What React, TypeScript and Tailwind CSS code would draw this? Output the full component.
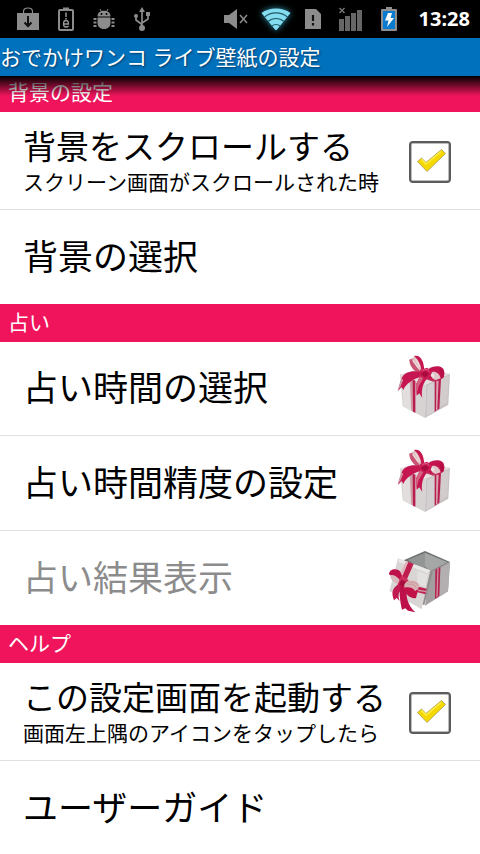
import { useState } from "react";
import type { ReactNode } from "react";

const FONT = "font-['Noto_Sans','Noto_Sans_CJK_JP',sans-serif]";

function StoreIcon() {
    return (
        <svg className="h-6 w-6" viewBox="0 0 24 24">
            <path d="M7.500 7V4.500C7.500 2 9.500 1 12 1S16.500 2 16.500 4.500V7" fill="none" stroke="#8c8c8c" strokeWidth="1.200" />
            <path d="M1 6H23V23H1Z" fill="#8c8c8c" />
            <path d="M12 9V18M8.500 15.500L12 19L15.500 15.500" fill="none" stroke="#111" strokeWidth="2" />
        </svg>
    );
}

function BatteryAppIcon() {
    return (
        <svg className="h-6 w-4" viewBox="0 0 16 24">
            <path d="M5 3V0.500H11V3" fill="#8c8c8c" />
            <rect x="1" y="3" width="14" height="20" rx="1" fill="none" stroke="#8c8c8c" strokeWidth="2" />
            <path d="M8 5.500V10M8 11V12.500" stroke="#999" strokeWidth="1.500" />
            <path d="M5.500 17H10.500C10.500 14 9.500 13.500 8 13.500S5.500 15 5.500 17S6.500 20 8 20S10 19.700 10.500 19" fill="none" stroke="#999" strokeWidth="1.300" />
        </svg>
    );
}

function AndroidIcon() {
    return (
        <svg className="h-6 w-6" viewBox="0 0 24 24" fill="#8c8c8c">
            <path d="M5.500 9.500C5.500 6 8 3.800 12 3.800S18.500 6 18.500 9.500Z" />
            <path d="M8 2L9.500 5M16 2L14.500 5" stroke="#8c8c8c" />
            <circle cx="9.500" cy="7" r="1" fill="#000" />
            <circle cx="14.500" cy="7" r="1" fill="#000" />
            <path d="M5.500 10.500H18.500V16C18.500 19.500 16 22 12 22S5.500 19.500 5.500 16Z" />
            <path d="M4.500 12H1.500M4.500 15.500H1.500M4.500 19H1.500M19.500 12H22.500M19.500 15.500H22.500M19.500 19H22.500" stroke="#8c8c8c" strokeWidth="2" />
        </svg>
    );
}

function UsbIcon() {
    return (
        <svg className="h-6 w-4" viewBox="0 0 16 24" fill="#8c8c8c">
            <path d="M8 4V21M8 17.500L2 13V9M8 16L14 12V7" fill="none" stroke="#8c8c8c" strokeWidth="1.700" />
            <path d="M8 0L11 5H5Z" />
            <circle cx="2" cy="9" r="2" />
            <path d="M12 5H16V9H12Z" />
            <circle cx="8" cy="21" r="3" />
        </svg>
    );
}

function MuteIcon() {
    return (
        <svg className="h-6 w-6" viewBox="0 0 24 24">
            <path d="M0 8H5L13 2V22L5 16H0Z" fill="#8c8c8c" />
            <path d="M16 8L23 16M23 8L16 16" stroke="#8c8c8c" strokeWidth="1.500" />
        </svg>
    );
}

function WifiIcon() {
    return (
        <svg className="h-6 w-8 drop-shadow-[0_0_3px_#2b8da6]" viewBox="0 0 32 24">
            <path d="M1.500 6C9 0 23 0 30.500 6L17 22.500Q16 24 15 22.500Z" fill="#84dcf0" />
            <path d="M4.500 10C11 4.500 21 4.500 27.500 10M8 14.500C12.500 10.500 19.500 10.500 24 14.500M12 19C14 17 18 17 20 19" fill="none" stroke="#1f5a68" strokeWidth="1.100" />
        </svg>
    );
}

function SimIcon() {
    return (
        <svg className="h-5 w-4" viewBox="0 0 16 20">
            <path d="M0 0H11L16 5V20H0Z" fill="#8c8c8c" />
            <path d="M8 6V12M8 14V16.500" stroke="#111" strokeWidth="2.200" />
        </svg>
    );
}

function SignalIcon() {
    return (
        <svg className="h-6 w-6" viewBox="0 0 24 24">
            <path d="M0.500 1L5.500 6M5.500 1L0.500 6" stroke="#777" strokeWidth="1.400" />
            <path d="M0 12H5V24H0ZM6 9H11V24H6ZM12 6H17V24H12ZM18 3H23V24H18Z" fill="#666" />
        </svg>
    );
}

function ChargingIcon() {
    return (
        <svg className="h-6 w-4" viewBox="0 0 16 24">
            <path d="M5 0H11V2H15Q16 2 16 3V23Q16 24 15 24H1Q0 24 0 23V3Q0 2 1 2H5Z" fill="#8f8f8f" />
            <path d="M2 4H14V22H2Z" fill="#0b7bd0" />
            <path d="M7 6H11L9.500 11H13L6 20L7.500 13.500H4Z" fill="#fff" />
        </svg>
    );
}

function GiftClosed() {
    return (
        <svg className="h-[72px] w-16 shrink-0" viewBox="24 24 192 216" aria-hidden="true">
            <path d="M60 88L130 70L210 86L137 119Z" fill="#e6e0e0" />
            <path d="M60 88L137 119L135 219L68 184Z" fill="#d8d3d3" />
            <path d="M66 104L90 114L92 194L70 183Z" fill="#e2dede" />
            <path d="M137 119L210 86L205 179L135 219Z" fill="#c8c2c3" />
            <path d="M142 122L164 112L162 200L140 212Z" fill="#d4cfd0" />
            <path d="M183 102L206 92L202 172L181 185Z" fill="#d2cccd" />
            <path d="M89 100L106 107V203L94 197Z" fill="#cf9ba4" />
            <path d="M98 104L106 107V203L99 200Z" fill="#b91c50" />
            <path d="M164 109L183 101L178 191L164 200Z" fill="#b91c50" />
            <path d="M169 107L176 104L172 195L168 197Z" fill="#d9a4ae" />
            <path d="M150 92L186 96L180 104L160 110L136 102Z" fill="#c1335f" />
            <path d="M130 80C116 88 92 70 88 44L106 34L124 46L133 76Z" fill="#ddbfc0" />
            <path d="M102 33C122 29 132 48 133 78L124 74C121 56 115 44 102 33Z" fill="#c71650" />
            <path d="M88 44L96 42L108 62L124 84L112 82C98 74 89 62 88 44Z" fill="#c85373" />
            <path d="M98 46L116 70M106 42L120 66" stroke="#efdcda" strokeWidth="4" />
            <path d="M126 82C98 74 72 82 65 100L54 138L65 126L70 135C78 116 98 102 130 94Z" fill="#c51652" />
            <path d="M64 100L53 134L60 128L70 104Z" fill="#cf91a0" />
            <path d="M138 78C150 66 176 58 188 70C196 80 194 94 188 100L174 107L150 102L138 92Z" fill="#c41450" />
            <path d="M150 86C158 76 176 79 182 100L168 105C160 104 153 97 150 86Z" fill="#e0c5c6" />
            <path d="M153 84C162 85 164 91 161 98L153 92Z" fill="#f1e5e3" />
            <path d="M178 72L190 74L191 96L184 99Z" fill="#b50e45" />
            <path d="M123 88L108 118L110 152L118 145L127 159C122 133 130 113 143 98Z" fill="#c51450" />
            <path d="M120 94L108 119L110 146L116 124L130 100Z" fill="#d56080" />
            <path d="M121 74L142 68L156 84L144 102L128 99L117 86Z" fill="#ca1d56" />
            <path d="M122 86L136 78L148 86L136 98Z" fill="#a90c3e" />
            <path d="M127 76L142 73L147 80" fill="none" stroke="#df5f86" strokeWidth="3" />
        </svg>
    );
}

function GiftOpen() {
    return (
        <svg className="h-[72px] w-16 shrink-0" viewBox="24 6 192 216" aria-hidden="true">
            <path d="M71 61L135 33L210 66L149 99Z" fill="#6d7170" />
            <path d="M83 60L135 38V83L124 85Z" fill="#929594" />
            <path d="M135 38L203 67L151 94L135 80Z" fill="#a4a7a5" />
            <path d="M148 97L210 66L204 154L135 197Z" fill="#a39fa0" />
            <path d="M182 84L210 68L204 154L178 170Z" fill="#b3afb0" />
            <path d="M166 89L181 81L178 168L165 177Z" fill="#b52351" />
            <path d="M172 85L176 83L173 170L169 172Z" fill="#d08e9b" />
            <path d="M149 92L158 96L133 196L124 191Z" fill="#918e8f" />
            <path d="M54 55L151 91L125 208L28 153Z" fill="#d9d5d5" />
            <path d="M57 56L148 90L145 100L55 65Z" fill="#eae7e7" />
            <path d="M112 94L143 104L136 140L112 132Z" fill="#e4e1e1" />
            <path d="M84 65L101 72L78 124L62 115Z" fill="#c11e50" />
            <path d="M78 63L85 66L66 112L58 108Z" fill="#e0b3ba" />
            <path d="M100 136L140 146L136 163L98 153Z" fill="#bd2451" />
            <path d="M108 148L140 153L139 157L108 152Z" fill="#d598a3" />
            <path d="M27 103C27 87 50 82 61 95L72 123L62 128C49 118 36 112 27 103Z" fill="#be104b" />
            <path d="M31 106C46 102 56 116 65 127L53 132C42 126 30 119 31 106Z" fill="#d9b7ba" />
            <path d="M65 104L86 121L71 145L52 136Z" fill="#cf2f5c" />
            <path d="M64 119L80 126L68 144L56 135Z" fill="#a90c3e" />
            <path d="M57 132C37 143 33 157 42 181L50 174L59 183C51 160 58 152 73 146Z" fill="#c01a50" />
            <path d="M61 138L82 146C76 168 82 193 106 217L84 212L76 205L66 209C59 180 58 160 61 138Z" fill="#bd0f49" />
            <path d="M76 133L114 151L108 174C91 178 74 160 70 143Z" fill="#c11149" />
            <path d="M73 134C80 118 108 118 117 133C119 143 112 151 105 153C99 142 85 140 73 143Z" fill="#d9b2b3" />
            <path d="M79 132C91 123 108 126 113 136M82 136C93 130 105 133 109 145" fill="none" stroke="#c08d96" strokeWidth="2" />
        </svg>
    );
}

function SectionHeader({ children }: { children: ReactNode }) {
    return <h2 className="h-[38px] shrink-0 bg-[#ef145c] px-2 text-[21px] leading-9 text-white">{children}</h2>;
}

interface CheckRowProps {
    id: string;
    title: string;
    summary: string;
}

function CheckRow({ id, title, summary }: CheckRowProps) {
    const [checked, setChecked] = useState(true);

    return (
        <div className="flex h-[98px] items-center justify-between border-b border-[#e0e0e0] pr-7 pl-[23px]">
            <label htmlFor={id} className="min-w-0 whitespace-nowrap">
                <span className="block text-[33px] leading-[43px]">{title}</span>
                <span className="block text-[21px] leading-7">{summary}</span>
            </label>
            <span className="relative mt-[3px] mr-px h-[42px] w-[42px] shrink-0">
                <input
                    id={id}
                    type="checkbox"
                    checked={checked}
                    onChange={(e) => setChecked(e.target.checked)}
                    className="block h-full w-full appearance-none rounded-sm border-2 border-[#5c5c5c] bg-white shadow-[inset_0_0_0_1px_#bdbdbd]"
                />
                {checked && (
                    <svg className="pointer-events-none absolute inset-0" viewBox="0 0 42 42">
                        <path d="M8.500 20.500L12.500 17L17 21.500L32.500 8.500L36.500 12.500L18 30.500Z" fill="#f5d800" stroke="#a89c55" strokeWidth="0.800" strokeLinejoin="round" />
                        <path d="M12.500 18.500L17 23L32 10.500" fill="none" stroke="#ffee4a" strokeWidth="1.500" />
                    </svg>
                )}
            </span>
        </div>
    );
}

interface ActionRowProps {
    title: string;
    icon?: ReactNode;
    disabled?: boolean;
    last?: boolean;
}

function ActionRow({ title, icon, disabled, last }: ActionRowProps) {
    return (
        <button
            type="button"
            disabled={disabled}
            className={`flex min-h-[94px] w-full items-center justify-between border-[#e0e0e0] pr-7 pl-[23px] text-left text-[35px] whitespace-nowrap disabled:text-[#8c8c8c] ${last ? "" : "border-b"}`}
        >
            <span>{title}</span>
            {icon}
        </button>
    );
}

export default function App() {
    return (
        <div className={`${FONT} w-full overflow-hidden bg-white text-black`}>
            <div className="flex h-[38px] items-center bg-black pr-[10px] pl-4">
                <div className="flex items-center gap-[18px]">
                    <StoreIcon />
                    <BatteryAppIcon />
                    <AndroidIcon />
                    <UsbIcon />
                </div>
                <div className="ml-auto flex items-center">
                    <div className="mr-[13px] flex items-center gap-3">
                        <MuteIcon />
                        <WifiIcon />
                    </div>
                    <div className="flex items-center gap-[18px]">
                        <SimIcon />
                        <SignalIcon />
                        <ChargingIcon />
                    </div>
                    <time className="ml-[22px] text-xl font-bold text-white">13:28</time>
                </div>
            </div>

            <h1 className="h-[38px] bg-[#0071bc] text-[21px] leading-[38px] whitespace-nowrap text-white [text-shadow:1px_1px_2px_#003b66]">
                おでかけワンコ ライブ壁紙の設定
            </h1>

            <main>
                {/* first header is scrolled slightly under the title bar */}
                <div className="relative flex h-9 flex-col justify-end overflow-hidden">
                    <SectionHeader>背景の設定</SectionHeader>
                    <div className="pointer-events-none absolute inset-x-0 top-0 h-5 bg-gradient-to-b from-black to-transparent" />
                </div>
                <CheckRow id="scroll" title="背景をスクロールする" summary="スクリーン画面がスクロールされた時" />
                <ActionRow title="背景の選択" last />

                <SectionHeader>占い</SectionHeader>
                <div className="grid min-h-[283px] auto-rows-fr">
                    <ActionRow title="占い時間の選択" icon={<GiftClosed />} />
                    <ActionRow title="占い時間精度の設定" icon={<GiftClosed />} />
                    <ActionRow title="占い結果表示" icon={<GiftOpen />} disabled last />
                </div>

                <SectionHeader>ヘルプ</SectionHeader>
                <CheckRow id="launch" title="この設定画面を起動する" summary="画面左上隅のアイコンをタップしたら" />
                <ActionRow title="ユーザーガイド" last />
            </main>
        </div>
    );
}
